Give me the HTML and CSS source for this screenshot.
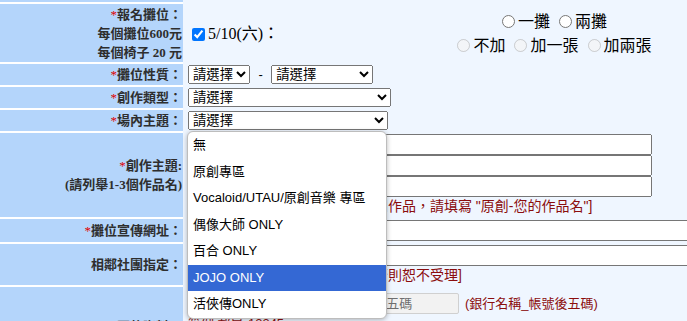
FILE: index.html
```html
<!DOCTYPE html>
<html lang="zh-Hant">
<head>
<meta charset="utf-8">
<title>報名表</title>
<link rel="stylesheet" href="styles.css">
</head>
<body>
<div class="form">
  <div class="row top"><div class="lab"></div><div class="val"></div></div>

  <div class="row">
    <div class="lab">
      <div><span class="req">*</span>報名攤位：</div>
      <div>每個攤位600元</div>
      <div>每個椅子 20 元</div>
    </div>
    <div class="val day">
      <label class="dayopt"><input type="checkbox" checked>5/10(六)：</label>
      <div class="choices">
        <div><input type="radio" name="booth">一攤 <input type="radio" name="booth">兩攤</div>
        <div><input type="radio" name="chair" disabled>不加 <input type="radio" name="chair" disabled>加一張 <input type="radio" name="chair" disabled>加兩張</div>
      </div>
    </div>
  </div>

  <div class="row">
    <div class="lab"><div><span class="req">*</span>攤位性質：</div></div>
    <div class="val">
      <select class="sel-a"><option>請選擇</option></select>
      <span class="dash">-</span>
      <select class="sel-b"><option>請選擇</option></select>
    </div>
  </div>

  <div class="row">
    <div class="lab"><div><span class="req">*</span>創作類型：</div></div>
    <div class="val"><select class="sel-c"><option>請選擇</option></select></div>
  </div>

  <div class="row">
    <div class="lab"><div><span class="req">*</span>場內主題：</div></div>
    <div class="val">
      <div class="dropwrap">
        <select class="sel-d"><option>請選擇</option></select>
        <div class="popup">
          <div class="opt">無</div>
          <div class="opt">原創專區</div>
          <div class="opt">Vocaloid/UTAU/原創音樂 專區</div>
          <div class="opt">偶像大師 ONLY</div>
          <div class="opt">百合 ONLY</div>
          <div class="opt hl">JOJO ONLY</div>
          <div class="opt">活俠傳ONLY</div>
        </div>
      </div>
    </div>
  </div>

  <div class="row">
    <div class="lab">
      <div><span class="req">*</span>創作主題:</div>
      <div>(請列舉1-3個作品名)</div>
    </div>
    <div class="val">
      <input class="txt work" type="text">
      <input class="txt work" type="text">
      <input class="txt work" type="text">
      <div class="note">[請填寫作品名稱，如為自己原創作品，請填寫 "原創-您的作品名"]</div>
    </div>
  </div>

  <div class="row">
    <div class="lab"><div><span class="req">*</span>攤位宣傳網址：</div></div>
    <div class="val"><input class="txt wide" type="text"></div>
  </div>

  <div class="row">
    <div class="lab"><div>相鄰社團指定：</div></div>
    <div class="val">
      <input class="txt wide" type="text">
      <div class="note short">[雙方皆需填寫對方社團名稱，否則恕不受理]</div>
    </div>
  </div>

  <div class="row last">
    <div class="lab"><div><span class="req">*</span>匯款資料：</div></div>
    <div class="val">
      <div class="bank">
        <input class="txt bankin" type="text" placeholder="請填寫您的匯款銀行名稱_帳號後五碼" disabled>
        <span class="note small">(銀行名稱_帳號後五碼)</span>
      </div>
      <div class="note small ex">範例:郵局-12345</div>
      <div class="note small ex">[請於報名後三日內完成匯款]</div>
    </div>
  </div>
</div>
</body>
</html>
```
FILE: styles.css
```css
html, body {
  margin: 0;
  padding: 0;
  overflow: hidden;
  background: #eff6ff;
}

.form {
  width: 687px;
  overflow: hidden;
}

.row {
  display: flex;
}

.lab {
  flex: none;
  width: 183px;
  box-sizing: border-box;
  padding-right: 1px;
  background: #b4d5fb;
  border-bottom: 2px solid #ffffff;
  display: flex;
  flex-direction: column;
  justify-content: center;
  align-items: flex-end;
  text-align: right;
  font: bold 13px/19px "Liberation Serif", "Noto Sans CJK TC", serif;
  color: #2e2e2e;
  white-space: nowrap;
}

.top .lab {
  height: 4px;
}

.req {
  color: #e00000;
  font-weight: normal;
}

.val {
  flex: 1;
  min-width: 0;
  background: #eff6ff;
  padding: 1px 0 3px 5px;
  font: 13px/19px "Liberation Sans", "Noto Sans CJK TC", sans-serif;
  color: #000000;
}

.top .val {
  padding: 0;
}

/* Row 1: booth + chairs */
.day {
  display: flex;
  align-items: center;
  padding-top: 6px;
  padding-bottom: 6px;
  font: 16px/24px "Liberation Serif", "Noto Sans CJK TC", serif;
}

.dayopt {
  width: 229px;
  flex: none;
  display: flex;
  align-items: center;
}

.dayopt input {
  margin: 3px 3px 3px 4px;
}

.choices {
  width: 300px;
  text-align: center;
}

.choices input {
  vertical-align: -1px;
}

/* selects */
select {
  height: 19px;
  box-sizing: border-box;
  font: 13.33px "Liberation Sans", "Noto Sans CJK TC", sans-serif;
  color: #000000;
  vertical-align: top;
  margin: 0;
}

.sel-a { width: 62px; }
.sel-b { width: 102px; }
.sel-c { width: 203px; }
.sel-d { width: 200px; }

.dash {
  display: inline-block;
  width: 14px;
  text-align: center;
  line-height: 19px;
  vertical-align: top;
}

/* dropdown popup (open select list) */
.dropwrap {
  position: relative;
  width: 200px;
  height: 19px;
}

.popup {
  position: absolute;
  left: -1px;
  top: 20px;
  width: 200px;
  box-sizing: border-box;
  background: #ffffff;
  border: 1px solid #bdbdbd;
  border-radius: 6px;
  box-shadow: 0 1px 5px rgba(0, 0, 0, 0.28);
  overflow: hidden;
  z-index: 10;
}

.opt {
  height: 26.5px;
  padding-left: 5px;
  font: 13px/26.5px "Liberation Sans", "Noto Sans CJK TC", sans-serif;
  color: #000000;
  white-space: nowrap;
}

.opt.hl {
  background: #3468d4;
  color: #ffffff;
}

/* text inputs */
.txt {
  display: block;
  height: 21px;
  box-sizing: border-box;
  margin: 0;
  font: 13px "Liberation Sans", "Noto Sans CJK TC", sans-serif;
}

.work { width: 464px; }
.wide { width: 530px; }

.note {
  color: #8b0d0d;
  font: 14px/19px "Liberation Sans", "Noto Sans CJK TC", sans-serif;
  white-space: nowrap;
}

.note.short {
  line-height: 18px;
}

.note.small {
  font-size: 13px;
}

.bank {
  display: flex;
  align-items: center;
  margin-top: 5px;
}

.bankin {
  width: 271px;
  height: 21px;
  padding: 0 2px 0 8px;
  background: #f2f2f2;
  border: 1px solid #d0d0d0;
  border-radius: 2px;
  color: #777777;
}

.bankin::placeholder {
  color: #6f6f6f;
}

.bank .note {
  margin-left: 6px;
}

.last .val {
  padding-bottom: 16px;
}
```
